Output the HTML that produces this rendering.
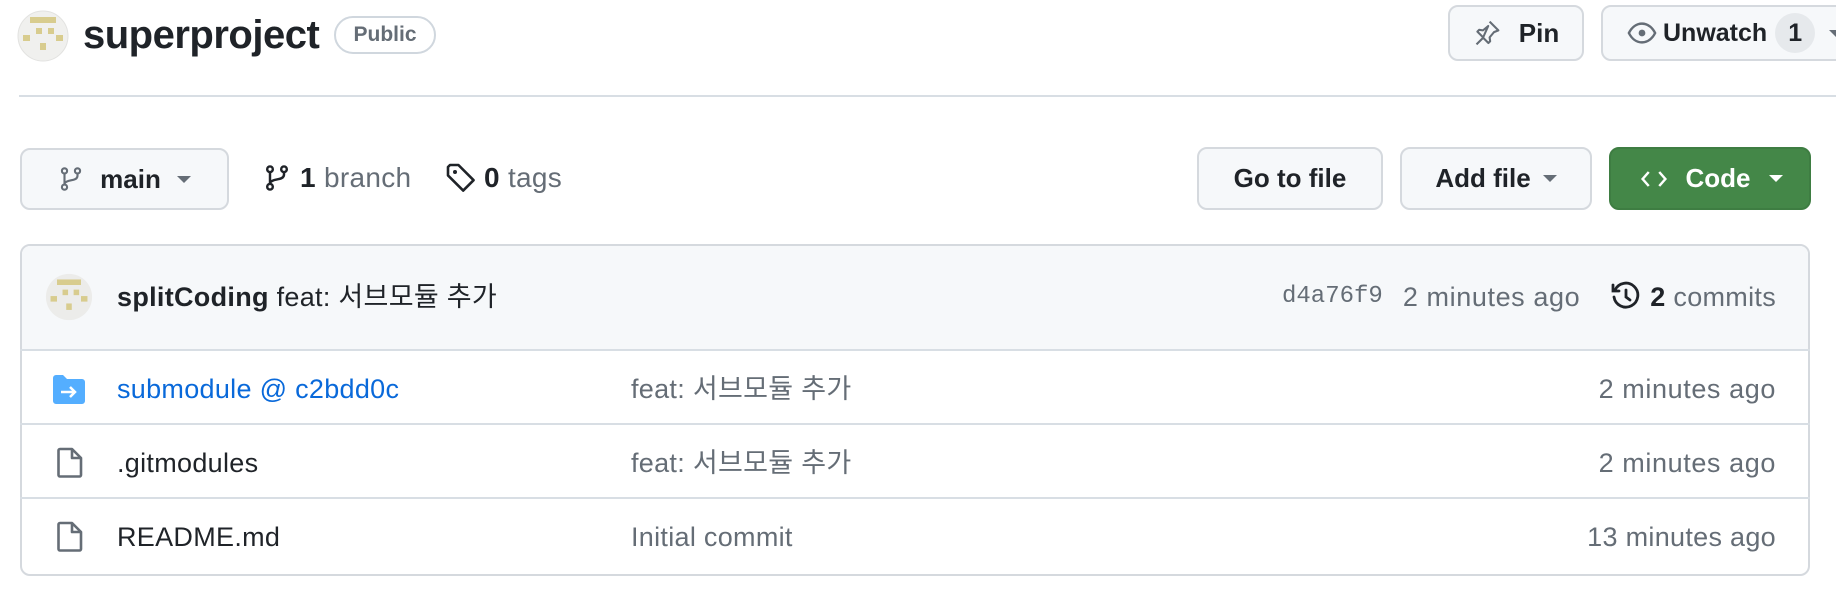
<!DOCTYPE html>
<html><head><meta charset="utf-8"><style>
*{box-sizing:border-box;margin:0;padding:0}
body{width:1836px;height:590px;background:#fff;font-family:"Liberation Sans","Noto Sans CJK KR",sans-serif;color:#1f2328;position:relative;overflow:hidden}
.a{position:absolute}
.btn{position:absolute;background:#f6f8fa;border:2px solid #d5d9de;border-radius:10px;display:flex;align-items:center;justify-content:center;font-size:26px;font-weight:bold;color:#1f2328}
.caret{display:inline-block;width:0;height:0;border-left:7px solid transparent;border-right:7px solid transparent;border-top:7px solid currentColor;margin-left:12px}
.t{position:absolute;font-size:27px;line-height:32px;white-space:nowrap;letter-spacing:0.3px}
.mut{color:#656d76}
.row{position:absolute;left:20px;width:1790px;border-top:2px solid #d8dee4}
</style></head><body>
<svg class="a" style="left:17px;top:10px" width="52" height="52" viewBox="0 0 52 52"><circle cx="26" cy="26" r="25" fill="#f0f0ee" stroke="#e2e2e0"/><g fill="#d8cc8e"><rect x="13" y="7" width="26" height="6"/><rect x="19" y="18" width="6" height="6"/><rect x="31" y="18" width="6" height="6"/><rect x="6" y="25" width="7" height="6"/><rect x="39" y="25" width="7" height="6"/><rect x="23" y="33" width="6" height="7"/></g></svg>
<div class="t" style="left:83px;top:12px;font-size:40px;line-height:46px;font-weight:bold;letter-spacing:-0.5px">superproject</div>
<div class="a" style="left:334px;top:16px;width:102px;height:38px;border:2px solid #d0d7de;border-radius:20px;font-size:21px;color:#656d76;display:flex;align-items:center;justify-content:center;font-weight:bold">Public</div>
<div class="btn" style="left:1448px;top:5px;width:136px;height:56px">
<svg width="28" height="28" viewBox="0 0 16 16" style="margin-right:18px"><path fill="none" stroke="#656d76" stroke-width="1.2" stroke-linejoin="round" d="M9.5 1.5l5 5-2.5 1-2.5 3 .3 2.2-1 1-3-3-3.8 3.8M5.8 10.5L2.5 7.2l1-1 2.2.3 3-2.5z"/></svg>Pin</div>
<div class="btn" style="left:1601px;top:5px;width:260px;height:56px;justify-content:flex-start;padding-left:24px;font-size:25px">
<svg width="30" height="30" viewBox="0 0 16 16" style="margin-right:6px"><path fill="none" stroke="#656d76" stroke-width="1.3" d="M1 8c1.5-3 4-5 7-5s5.5 2 7 5c-1.5 3-4 5-7 5S2.5 11 1 8z"/><circle cx="8" cy="8" r="1.8" fill="#656d76"/></svg>Unwatch<span style="background:#e6e9ec;border-radius:50%;width:40px;height:40px;display:inline-flex;align-items:center;justify-content:center;margin-left:8px;font-weight:bold">1</span><span class="caret" style="color:#656d76;margin-left:14px"></span></div>
<div class="a" style="left:19px;top:95px;width:1817px;height:2px;background:#d8dee4"></div>

<div class="btn" style="left:20px;top:148px;width:209px;height:62px">
<svg width="26" height="28" viewBox="0 0 16 16" style="margin-right:16px"><g fill="none" stroke="#656d76" stroke-width="1.3"><circle cx="4" cy="3" r="1.6"/><circle cx="4" cy="13" r="1.6"/><circle cx="12" cy="3" r="1.6"/><path d="M4 4.6v6.8M12 4.6v1.4c0 2-2 2.5-4 2.8S4 10 4 11"/></g></svg>main<span class="caret" style="color:#656d76;margin-left:16px"></span></div>
<svg class="a" style="left:263px;top:163px" width="28" height="30" viewBox="0 0 16 16"><g fill="none" stroke="#1f2328" stroke-width="1.4"><circle cx="4" cy="3" r="1.6"/><circle cx="4" cy="13" r="1.6"/><circle cx="12" cy="3" r="1.6"/><path d="M4 4.6v6.8M12 4.6v1.4c0 2-2 2.5-4 2.8S4 10 4 11"/></g></svg>
<div class="t" style="left:300px;top:162px;font-size:28px"><b>1</b> <span class="mut">branch</span></div>
<svg class="a" style="left:445px;top:162px" width="32" height="32" viewBox="0 0 16 16"><path fill="none" stroke="#1f2328" stroke-width="1.3" stroke-linejoin="round" d="M1.5 2.5v4.2l7.6 7.6 5.2-5.2-7.6-7.6H2.5z"/><circle cx="5" cy="5" r="1" fill="#1f2328"/></svg>
<div class="t" style="left:484px;top:162px;font-size:28px"><b>0</b> <span class="mut">tags</span></div>

<div class="btn" style="left:1197px;top:147px;width:186px;height:63px">Go to file</div>
<div class="btn" style="left:1400px;top:147px;width:192px;height:63px">Add file<span class="caret" style="color:#656d76"></span></div>
<div class="btn" style="left:1609px;top:147px;width:202px;height:63px;background:#448748;border-color:#3e7d42;color:#fff"><svg width="32" height="28" viewBox="0 0 16 16" style="margin-right:16px"><path fill="none" stroke="#fff" stroke-width="1.4" d="M5 4L1.5 8 5 12M11 4l3.5 4-3.5 4"/></svg>Code<span class="caret" style="margin-left:18px"></span></div>

<div class="a" style="left:20px;top:244px;width:1790px;height:332px;border:2px solid #d5d9de;border-radius:10px;overflow:hidden">
<div class="a" style="left:0;top:0;width:100%;height:105px;background:#f6f8fa"></div>
</div>
<svg class="a" style="left:45px;top:273px" width="48" height="48" viewBox="0 0 52 52"><circle cx="26" cy="26" r="25" fill="#ececea"/><g fill="#d8cc8e"><rect x="13" y="7" width="26" height="6"/><rect x="19" y="18" width="6" height="6"/><rect x="31" y="18" width="6" height="6"/><rect x="6" y="25" width="7" height="6"/><rect x="39" y="25" width="7" height="6"/><rect x="23" y="33" width="6" height="7"/></g></svg>
<div class="t" style="left:117px;top:281px"><b>splitCoding</b> feat: 서브모듈 추가</div>
<div class="a" style="right:60px;top:281px;display:flex;align-items:center;white-space:nowrap;font-size:27px;line-height:32px;letter-spacing:0.3px">
<span class="mut" style="font-family:'Liberation Mono',monospace;font-size:24px;letter-spacing:0">d4a76f9</span>
<span class="mut" style="margin-left:20px;letter-spacing:0.6px">2 minutes ago</span>
<svg width="32" height="32" viewBox="0 0 16 16" style="margin-left:30px;margin-right:8px"><g fill="none" stroke="#1f2328" stroke-width="1.4" stroke-linecap="round"><path d="M2.5 4.5A6 6 0 1 1 2 8"/><path d="M1.5 2v3h3M8 4.5V8l2 1.5"/></g></svg>
<span><b>2</b> <span class="mut">commits</span></span></div>

<div class="row" style="top:349px"></div>
<div class="row" style="top:423px"></div>
<div class="row" style="top:497px"></div>

<svg class="a" style="left:53px;top:375px" width="32" height="29" viewBox="0 0 32 29"><path fill="#54aeff" d="M0 3a3 3 0 0 1 3-3h7l4 4h15a3 3 0 0 1 3 3v19a3 3 0 0 1-3 3H3a3 3 0 0 1-3-3z"/><path fill="none" stroke="#fff" stroke-width="2.5" d="M8 17h14M17 12l5 5-5 5"/></svg>
<div class="t" style="left:117px;top:373px;color:#0969da">submodule @ c2bdd0c</div>
<div class="t mut" style="left:631px;top:373px">feat: 서브모듈 추가</div>
<div class="t mut" style="left:1476px;top:373px;width:300px;text-align:right;letter-spacing:0.6px">2 minutes ago</div>

<svg class="a" style="left:56px;top:447px" width="28" height="32" viewBox="0 0 28 32"><path fill="none" stroke="#656d76" stroke-width="2.6" stroke-linejoin="round" d="M2.5 3.5a1.5 1.5 0 0 1 1.5-1.5h12l9 9v17a1.5 1.5 0 0 1-1.5 1.5h-19.5a1.5 1.5 0 0 1-1.5-1.5zM16 2v9h9"/></svg>
<div class="t" style="left:117px;top:447px">.gitmodules</div>
<div class="t mut" style="left:631px;top:447px">feat: 서브모듈 추가</div>
<div class="t mut" style="left:1476px;top:447px;width:300px;text-align:right;letter-spacing:0.6px">2 minutes ago</div>

<svg class="a" style="left:56px;top:521px" width="28" height="32" viewBox="0 0 28 32"><path fill="none" stroke="#656d76" stroke-width="2.6" stroke-linejoin="round" d="M2.5 3.5a1.5 1.5 0 0 1 1.5-1.5h12l9 9v17a1.5 1.5 0 0 1-1.5 1.5h-19.5a1.5 1.5 0 0 1-1.5-1.5zM16 2v9h9"/></svg>
<div class="t" style="left:117px;top:521px">README.md</div>
<div class="t mut" style="left:631px;top:521px">Initial commit</div>
<div class="t mut" style="left:1476px;top:521px;width:300px;text-align:right">13 minutes ago</div>
</body></html>
